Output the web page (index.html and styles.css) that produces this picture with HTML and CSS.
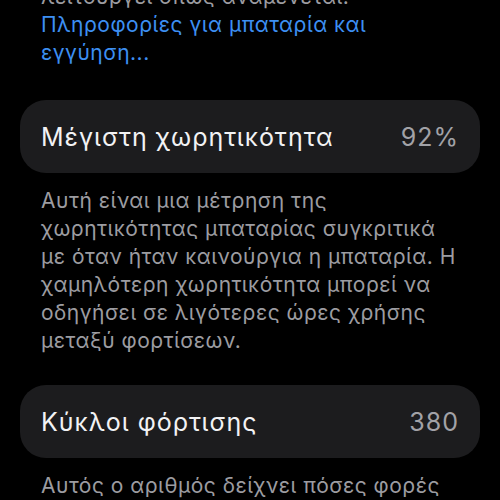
FILE: index.html
```html
<!DOCTYPE html>
<html lang="el">
<head>
<meta charset="utf-8">
<link rel="stylesheet" href="styles.css">
</head>
<body>
<main class="page">
  <p class="note top-note">λειτουργεί όπως αναμένεται.<br><a class="link" href="#">Πληροφορίες για μπαταρία και<br>εγγύηση...</a></p>

  <section class="group">
    <div class="card">
      <span class="label">Μέγιστη χωρητικότητα</span>
      <span class="value">92%</span>
    </div>
    <p class="note">Αυτή είναι μια μέτρηση της<br>χωρητικότητας μπαταρίας συγκριτικά<br>με όταν ήταν καινούργια η μπαταρία. Η<br>χαμηλότερη χωρητικότητα μπορεί να<br>οδηγήσει σε λιγότερες ώρες χρήσης<br>μεταξύ φορτίσεων.</p>
  </section>

  <section class="group">
    <div class="card">
      <span class="label">Κύκλοι φόρτισης</span>
      <span class="value">380</span>
    </div>
    <p class="note">Αυτός ο αριθμός δείχνει πόσες φορές</p>
  </section>
</main>
</body>
</html>
```

FILE: styles.css
```css
html, body {
  margin: 0;
  padding: 0;
  background: #000;
  overflow: hidden;
}

.page {
  display: flex;
  flex-direction: column;
  padding: 0 20px;
  font-family: Inter, "Noto Sans", sans-serif;
  -webkit-font-smoothing: antialiased;
}

.note {
  margin: 0;
  padding: 0 21px;
  font-size: 21px;
  line-height: 28px;
  letter-spacing: 0.5px;
  color: #9c9ca1;
  white-space: nowrap;
}

.top-note {
  margin-top: -17px;
  margin-bottom: 33px;
}

.link {
  color: #3d8ff2;
  text-decoration: none;
}

.group {
  display: flex;
  flex-direction: column;
  gap: 14px;
  margin-bottom: 30px;
}

.card {
  display: flex;
  align-items: center;
  justify-content: space-between;
  height: 73px;
  padding: 0 21px 0 21px;
  background: #1c1c1e;
  border-radius: 26px;
}

.label {
  font-size: 25px;
  letter-spacing: 1px;
  color: #f2f2f4;
}

.value {
  font-size: 25px;
  letter-spacing: 1px;
  color: #a2a2a7;
}
```
